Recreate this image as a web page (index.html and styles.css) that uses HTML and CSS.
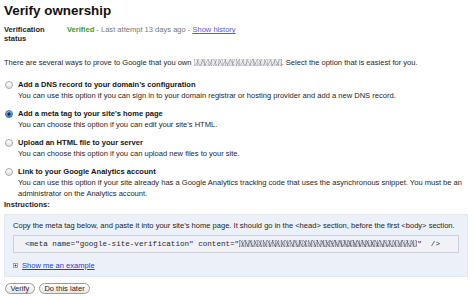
FILE: index.html
```html
<!DOCTYPE html>
<html lang="en">
<head>
<meta charset="utf-8">
<title>Verify ownership</title>
<link rel="stylesheet" href="styles.css">
</head>
<body>
<div class="page">
  <h1 class="title">Verify ownership</h1>

  <div class="status">
    <div class="status-label">Verification<br>status</div>
    <div class="status-value"><span class="ok">Verified</span><span class="muted"> - Last attempt 13 days ago - </span><a class="link" href="#">Show history</a></div>
  </div>

  <p class="intro">There are several ways to prove to Google that you own <span class="redact redact-domain"></span>. Select the option that is easiest for you.</p>

  <div class="options">
    <div class="option">
      <span class="radio"></span>
      <div class="option-body">
        <div class="option-title">Add a DNS record to your domain’s configuration</div>
        <div class="option-desc">You can use this option if you can sign in to your domain registrar or hosting provider and add a new DNS record.</div>
      </div>
    </div>
    <div class="option">
      <span class="radio checked"></span>
      <div class="option-body">
        <div class="option-title">Add a meta tag to your site’s home page</div>
        <div class="option-desc">You can choose this option if you can edit your site’s HTML.</div>
      </div>
    </div>
    <div class="option">
      <span class="radio"></span>
      <div class="option-body">
        <div class="option-title">Upload an HTML file to your server</div>
        <div class="option-desc">You can choose this option if you can upload new files to your site.</div>
      </div>
    </div>
    <div class="option">
      <span class="radio"></span>
      <div class="option-body">
        <div class="option-title">Link to your Google Analytics account</div>
        <div class="option-desc">You can use this option if your site already has a Google Analytics tracking code that uses the asynchronous snippet. You must be an administrator on the Analytics account.</div>
      </div>
    </div>
  </div>

  <div class="instr-label">Instructions:</div>
  <div class="instr-box">
    <div class="instr-text">Copy the meta tag below, and paste it into your site’s home page. It should go in the &lt;head&gt; section, before the first &lt;body&gt; section.</div>
    <div class="code">&lt;meta name="google-site-verification" content="<span class="redact redact-code"></span>"  /&gt;</div>
    <div class="example">
      <svg class="expander" width="5" height="5" viewBox="0 0 5 5" aria-hidden="true">
        <rect x="0.5" y="0.5" width="4" height="4" fill="#fff" stroke="#8a8f9a" stroke-width="0.8"/>
        <path d="M1.3 2.5H3.7M2.5 1.3V3.7" stroke="#333" stroke-width="0.7"/>
      </svg>
      <a class="link link-strong" href="#">Show me an example</a>
    </div>
  </div>

  <div class="actions">
    <button class="btn" type="button">Verify</button>
    <button class="btn" type="button">Do this later</button>
  </div>
</div>
</body>
</html>
```

FILE: styles.css
```css
html, body {
  margin: 0;
  padding: 0;
  background: #fff;
}

body {
  font-family: "Liberation Sans", Arial, Helvetica, sans-serif;
  font-size: 7.55px;
  color: #1e1e1e;
}

.page {
  padding: 3px 6px 0 4px;
}

.title {
  margin: 0;
  font-size: 13.4px;
  line-height: 16px;
  font-weight: bold;
  color: #111;
}

.status {
  display: flex;
  margin-top: 6.3px;
  line-height: 9px;
}

.status-label {
  width: 63px;
  font-weight: bold;
  color: #1e1e1e;
}

.ok {
  color: #3a9a2e;
  font-weight: bold;
}

.muted {
  color: #777;
}

.link {
  color: #5a5ad0;
  text-decoration: underline;
}

.link-strong {
  color: #2a3fc0;
}

.intro {
  margin: 13.4px 0 0 0;
  line-height: 11px;
}

.redact {
  display: inline-block;
  vertical-align: -1px;
  height: 7px;
}

.redact-domain {
  width: 88px;
  background:
    repeating-linear-gradient(63deg, rgba(120,120,135,0.35) 0 1px, rgba(255,255,255,0) 1px 5px),
    repeating-linear-gradient(117deg, rgba(90,90,110,0.3) 0 1px, rgba(255,255,255,0) 1px 4px),
    repeating-linear-gradient(90deg, rgba(160,160,170,0.35) 0 1px, rgba(255,255,255,0) 1px 3px, rgba(110,110,120,0.3) 3px 4px, rgba(255,255,255,0) 4px 7px),
    linear-gradient(#f0f0f2, #e2e2e6);
}

.redact-code {
  width: 178px;
  background:
    repeating-linear-gradient(63deg, rgba(70,70,85,0.45) 0 1px, rgba(255,255,255,0) 1px 4px),
    repeating-linear-gradient(117deg, rgba(90,90,110,0.4) 0 1px, rgba(255,255,255,0) 1px 5px),
    repeating-linear-gradient(90deg, rgba(80,80,95,0.4) 0 1px, rgba(255,255,255,0) 1px 3px, rgba(130,130,145,0.4) 3px 4px, rgba(255,255,255,0) 4px 6px),
    linear-gradient(#dfe2e9, #c9ccd4);
}

.options {
  display: flex;
  flex-direction: column;
  gap: 7px;
  margin-top: 11.8px;
}

.option {
  display: flex;
  align-items: flex-start;
  padding-left: 1px;
}

.radio {
  flex: none;
  box-sizing: border-box;
  width: 8px;
  height: 8px;
  margin-top: 1.5px;
  margin-right: 5px;
  border-radius: 50%;
  border: 1px solid #a9a9a9;
  background: linear-gradient(#ffffff, #e2e2e2);
}

.radio.checked {
  border-color: #3d6fb8;
  background: radial-gradient(circle, #1c2c4c 0 1.4px, rgba(0,0,0,0) 1.8px), linear-gradient(#8fbcf2, #3b7fdc);
}

.option-body {
  flex: 1;
  padding-right: 4px;
}

.option-title {
  font-weight: bold;
  line-height: 11px;
  color: #141414;
}

.option-desc {
  line-height: 11px;
}

.instr-label {
  font-weight: bold;
  line-height: 11px;
}

.instr-box {
  margin-top: 3.5px;
  padding: 5.5px 8px 5.5px 8px;
  border: 1px solid #e2e6ef;
  background: #ecf0f8;
}

.instr-text {
  line-height: 11px;
}

.code {
  margin-top: 3.5px;
  padding-left: 11px;
  height: 16px;
  line-height: 16px;
  border: 1px solid #cbd0db;
  background: #f0f2f8;
  font-family: "Liberation Mono", "Courier New", monospace;
  font-size: 7.6px;
  color: #2a2a2a;
  white-space: pre;
}

.example {
  display: flex;
  align-items: center;
  gap: 4px;
  margin-top: 7px;
  line-height: 11px;
}

.expander {
  display: block;
  flex: none;
}

.actions {
  display: flex;
  gap: 4px;
  margin-top: 5.5px;
  padding-left: 1px;
}

.btn {
  height: 11.5px;
  padding: 0 4.5px;
  border: 1px solid #9c9c9c;
  border-radius: 6px;
  background: linear-gradient(#ffffff, #e6e6e6);
  font-family: "Liberation Sans", Arial, Helvetica, sans-serif;
  font-size: 7.55px;
  line-height: 9px;
  color: #1e1e1e;
}
```
